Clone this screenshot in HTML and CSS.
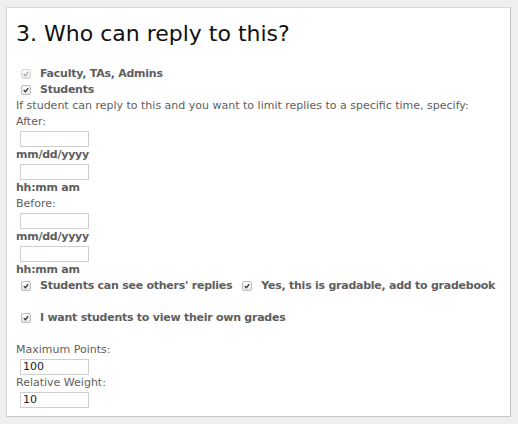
FILE: index.html
```html
<!DOCTYPE html>
<html>
<head>
<meta charset="utf-8">
<link rel="stylesheet" href="styles.css">
</head>
<body>
<div class="panel">
  <h1 class="title">3. Who can reply to this?</h1>
  <div class="row"><span class="cb cb-disabled"><svg viewBox="0 0 10 10"><path d="M2.2 5.2 L4.2 7.2 L7.8 2.6"/></svg></span><b>Faculty, TAs, Admins</b></div>
  <div class="row"><span class="cb"><svg viewBox="0 0 10 10"><path d="M2.2 5.2 L4.2 7.2 L7.8 2.6"/></svg></span><b>Students</b></div>
  <div class="line">If student can reply to this and you want to limit replies to a specific time, specify:</div>
  <div class="line">After:</div>
  <div class="field"><span class="input"></span></div>
  <div class="line"><b>mm/dd/yyyy</b></div>
  <div class="field"><span class="input"></span></div>
  <div class="line"><b>hh:mm am</b></div>
  <div class="line">Before:</div>
  <div class="field"><span class="input"></span></div>
  <div class="line"><b>mm/dd/yyyy</b></div>
  <div class="field"><span class="input"></span></div>
  <div class="line"><b>hh:mm am</b></div>
  <div class="row"><span class="cb"><svg viewBox="0 0 10 10"><path d="M2.2 5.2 L4.2 7.2 L7.8 2.6"/></svg></span><b>Students can see others' replies</b><span class="cb cb-gap"><svg viewBox="0 0 10 10"><path d="M2.2 5.2 L4.2 7.2 L7.8 2.6"/></svg></span><b>Yes, this is gradable, add to gradebook</b></div>
  <div class="spacer"></div>
  <div class="row"><span class="cb"><svg viewBox="0 0 10 10"><path d="M2.2 5.2 L4.2 7.2 L7.8 2.6"/></svg></span><b>I want students to view their own grades</b></div>
  <div class="spacer"></div>
  <div class="line">Maximum Points:</div>
  <div class="field"><span class="input">100</span></div>
  <div class="line">Relative Weight:</div>
  <div class="field"><span class="input">10</span></div>
</div>
</body>
</html>
```
FILE: styles.css
```css
html, body { margin: 0; padding: 0; }
body {
  background: #efefef;
  padding: 7px 7px 0 6px;
  font-family: "DejaVu Sans", Verdana, sans-serif;
  font-size: 11px;
  color: #5e5e5e;
}
.panel {
  width: 494px;
  background: #fff;
  border: 1px solid #d8d8d8;
  border-right-color: #c4c4c4;
  border-bottom-color: #c4c4c4;
  padding: 0 0 8px 9px;
  box-sizing: content-box;
}
.title {
  margin: 0;
  padding: 12px 0 18px 0;
  font-size: 22px;
  font-weight: normal;
  color: #111;
  line-height: 28px;
}
.line, .row {
  line-height: 16px;
  height: 16px;
  white-space: nowrap;
}
.row { display: flex; align-items: center; }
b { font-weight: bold; color: #5e5e5e; letter-spacing: -0.25px; }
.cb {
  display: inline-flex;
  width: 8px;
  height: 8px;
  border: 1px solid #bdbdbd;
  border-radius: 2px;
  background: linear-gradient(#fdfdfd, #e6e6e6);
  margin: 0 9px 0 5px;
}
.cb svg { width: 8px; height: 8px; }
.cb path { fill: none; stroke: #333; stroke-width: 1.6; }
.cb-disabled path { stroke: #aaa; }
.cb-disabled { border-color: #d4d4d4; }
.cb-gap { margin-left: 10px; }
.field { height: 16px; padding: 1px 0 0 4px; }
.input {
  display: block;
  box-sizing: border-box;
  width: 69px;
  height: 16px;
  border: 1px solid #cfcfcf;
  font-size: 11px;
  line-height: 14px;
  padding-left: 2px;
  color: #222;
}
.spacer { height: 16px; }
```
